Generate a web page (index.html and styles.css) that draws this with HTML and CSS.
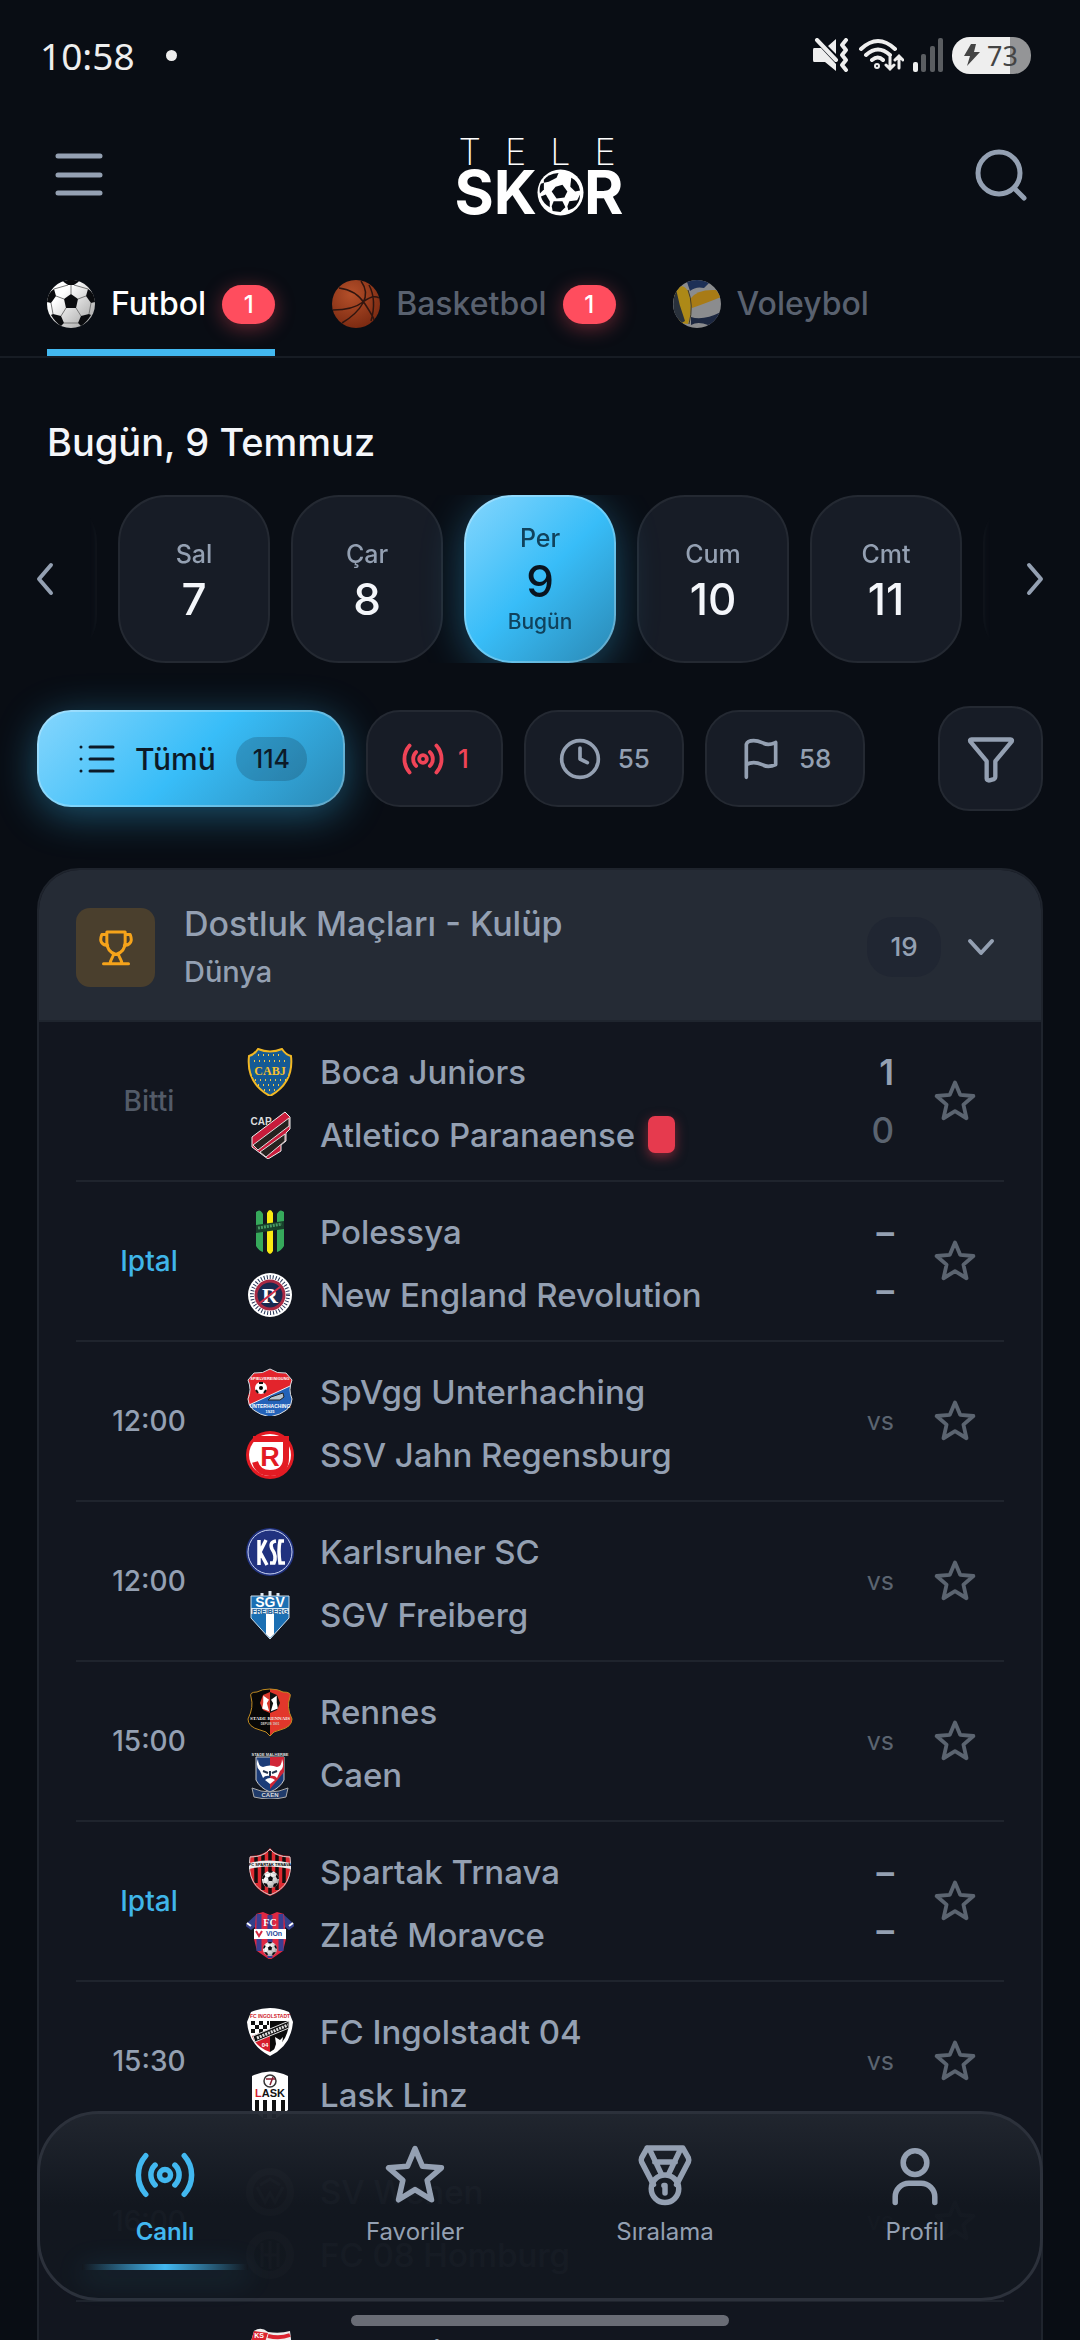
FILE: index.html
```html
<!DOCTYPE html>
<html lang="tr">
<head>
  <meta charset="UTF-8">
  <meta name="viewport" content="width=device-width, initial-scale=1.0">
  <title>TeleSkor</title>
  <link rel="stylesheet" href="styles.css">
</head>
<body>
  <!-- shared icons -->
  <svg class="defs" aria-hidden="true">
    <defs>
      <linearGradient id="shade" x1="0" y1="0" x2="1" y2="1">
        <stop offset="0.3" stop-color="#fff"/>
        <stop offset="1" stop-color="#9b9b9b"/>
      </linearGradient>
      <radialGradient id="orange" cx="0.4" cy="0.3" r="0.7">
        <stop offset="0" stop-color="#b5502a"/>
        <stop offset="1" stop-color="#7d2b12"/>
      </radialGradient>
      <clipPath id="round"><circle cx="24" cy="24" r="24"/></clipPath>
      <symbol id="star" viewBox="0 0 24 24">
        <path d="M12 2.400l2.700 6.400 6.900.6-5.200 4.500 1.600 7.100-6-3.700-6 3.700 1.600-7.100-5.200-4.500 6.900-.6z"/>
      </symbol>
      <symbol id="live" viewBox="0 0 24 24">
        <circle cx="12" cy="12" r="2"/>
        <path d="M8.400 15.600a5 5 0 0 1 0-7.200M15.600 8.400a5 5 0 0 1 0 7.200M5 19a10.500 10.500 0 0 1 0-14M19 5a10.500 10.500 0 0 1 0 14"/>
      </symbol>
      <symbol id="ball" viewBox="0 0 48 48">
        <circle cx="24" cy="24" r="24" fill="url(#shade)"/>
        <g fill="#0a0b0e">
          <path d="M24 14l7 5-2 9H19l-2-9z"/>
          <path d="M16 1.500Q24-2 32 1.500L27 5h-6z"/>
          <path d="M0 22Q1 12 7 9l2 7-5 7z"/>
          <path d="M48 22Q47 12 41 9l-2 7 5 7z"/>
          <path d="M6 34l8 2 3 7-3 3Q8 42 4 35z"/>
          <path d="M42 34l-8 2-3 7 3 3q6-4 10-11z"/>
        </g>
        <path d="M24 5v9M9 16l8 3M39 16l-8 3M19 28l-5 8M29 28l5 8M7 9l14-4M41 9L27 5M4 23l2 11M44 23l-2 11M17 43h14" fill="none" stroke="#777" stroke-width="1"/>
      </symbol>
    </defs>
  </svg>

  <div class="app">
    <div class="status">
      <span class="clock">10:58</span>
      <span class="dot"></span>
      <div class="status-icons">
        <svg width="36" height="34" viewBox="0 0 36 34" fill="#eee">
          <path d="M1 10h7l15 16v7L12 24H1Q0 24 0 22V12Q0 10 1 10zM15 8l8-7v15z"/>
          <path d="M4 2l19 20" stroke="#eee" stroke-width="4" stroke-linecap="round"/>
          <path d="M33 2l-4 5 4 5-4 5 4 5-4 5 4 5" fill="none" stroke="#eee" stroke-width="4" stroke-linecap="round" stroke-linejoin="round"/>
        </svg>
        <svg class="wifi" width="46" height="34" viewBox="0 0 46 34" fill="none" stroke="#eee" stroke-width="4" stroke-linecap="round">
          <path d="M3 11Q20-5 37 11M8 17q12-11 24 0M14 22q6-5 11 0"/>
          <circle cx="19" cy="28" r="1"/>
          <path d="M32 19v12M28 27l4 4 4-4M41 30V19M37 22l4-4 4 4" stroke-width="3"/>
        </svg>
        <svg width="30" height="34" viewBox="0 0 30 34" fill="#5a5d61">
          <rect y="24" width="5" height="10" rx="2" fill="#eee"/>
          <rect x="8" y="16" width="5" height="18" rx="2"/>
          <rect x="17" y="8" width="5" height="26" rx="2"/>
          <rect x="25" width="5" height="34" rx="2"/>
        </svg>
        <span class="battery">
          <svg width="18" height="22" viewBox="0 0 18 22" fill="#444"><path d="M8 0L1 12h6L4 22 17 8h-6l2-8z"/></svg>73
        </span>
      </div>
    </div>

    <header class="header">
      <button class="icon-btn" aria-label="Menü">
        <svg width="48" height="48" viewBox="0 0 48 48" stroke="#94a0b2" stroke-width="5" stroke-linecap="round"><path d="M3 5h42M3 24h42M3 42h42"/></svg>
      </button>
      <div class="logo">
        <div class="logo-top">TELE</div>
        <div class="logo-bottom">
          <span>SK</span>
          <svg width="47" height="47" viewBox="0 0 48 48">
            <circle cx="24" cy="24" r="23.500" fill="#fff"/>
            <g fill="#090d14">
              <path d="M19 16l7-2 5 7-3 6-8 1-5-7z" transform="translate(0 2)"/>
              <path d="M7 11q4-6 15-7l-2 5-8 4-5 1z"/>
              <path d="M27 4l-2 5 8 6 6 1 1-5q-5-6-13-7z" fill="#fff"/>
              <path d="M35 9q7 3 9 13l-5 1-5-5z"/>
              <path d="M4 15l3-1 0 7-4 4q-1-6 1-10z"/>
              <path d="M4 28l5-2 4 7 0 6q-7-4-9-11z"/>
              <path d="M17 33l9 0 3 6-5 5-8-1-1-5z"/>
              <path d="M33 33l8-1 3-6q0 9-7 14l-5 2-1-4z"/>
            </g>
          </svg>
          <span>R</span>
        </div>
      </div>
      <button class="icon-btn" aria-label="Ara">
        <svg width="52" height="52" viewBox="0 0 52 52" fill="none" stroke="#94a0b2" stroke-width="5" stroke-linecap="round"><circle cx="24" cy="24" r="21"/><path d="M39 39l10 10"/></svg>
      </button>
    </header>

    <nav class="tabs">
      <button class="tab active">
        <svg width="48" height="48"><use href="#ball"/></svg>
        Futbol <span class="count">1</span>
      </button>
      <button class="tab">
        <svg width="48" height="48" viewBox="0 0 48 48">
          <circle cx="24" cy="24" r="24" fill="url(#orange)"/>
          <path d="M7 8Q24 10 33 24t9 16M29 1q8 11 2 22T10 43M1 30q20 0 30-8t16-4M37 5q8 15 2 36" fill="none" stroke="#30150f" stroke-width="1.500"/>
        </svg>
        Basketbol <span class="count">1</span>
      </button>
      <button class="tab">
        <svg width="48" height="48" viewBox="0 0 48 48">
          <g clip-path="url(#round)">
            <rect width="48" height="48" fill="#8b8c8e"/>
            <path d="M14 2Q24-3 36 3l-5 5q-8-2-14 3z" fill="#1d3056"/>
            <path d="M17 19Q24 9 43 10l5 7q-12 5-29 11z" fill="#a87b16"/>
            <path d="M0 10Q10 2 15 11q6 16 0 33L6 43z" fill="#ad8917"/>
            <path d="M3 9q3 16 9 32l-5 3Q-4 30 3 9z" fill="#29313b"/>
            <path d="M18 37q12 4 30-5v9l-13 4q-10-4-17 0z" fill="#1c2740"/>
            <path d="M15 10q6 15 1 34" fill="none" stroke="#443a20"/>
          </g>
        </svg>
        Voleybol
      </button>
    </nav>

    <main>
      <h1 class="day-title">Bugün, 9 Temmuz</h1>

      <div class="dates">
        <button class="arrow" aria-label="Önceki">
          <svg width="18" height="34" viewBox="0 0 18 34"><path d="M15 3L3 17l12 14"/></svg>
        </button>
        <div class="strip">
          <button class="date"><small>Pzt</small><b>6</b></button>
          <button class="date"><small>Sal</small><b>7</b></button>
          <button class="date"><small>Çar</small><b>8</b></button>
          <button class="date selected"><small>Per</small><b>9</b><em>Bugün</em></button>
          <button class="date"><small>Cum</small><b>10</b></button>
          <button class="date"><small>Cmt</small><b>11</b></button>
          <button class="date"><small>Paz</small><b>12</b></button>
        </div>
        <button class="arrow" aria-label="Sonraki">
          <svg width="18" height="34" viewBox="0 0 18 34"><path d="M3 3l12 14L3 31"/></svg>
        </button>
      </div>

      <div class="filters">
        <button class="chip all">
          <svg width="36" height="32" viewBox="0 0 36 32" fill="none" stroke="#0c1a28" stroke-width="3" stroke-linecap="round"><path d="M11 4h23M11 16h23M11 28h23M2 4h0M2 16h0M2 28h0"/></svg>
          Tümü <span class="pill">114</span>
        </button>
        <button class="chip live">
          <svg class="line" width="46" height="46"><use href="#live"/></svg>1
        </button>
        <button class="chip">
          <svg class="line" width="44" height="44" viewBox="0 0 24 24"><circle cx="12" cy="12" r="10"/><path d="M12 6v6l4 2"/></svg>55
        </button>
        <button class="chip">
          <svg class="line" width="44" height="44" viewBox="0 0 24 24"><path d="M4 22V4c.5-1.500 2-2 4-2 4 0 5 2 8 2 2 0 3-.6 4-1v12c-1 .5-2 1-4 1-3 0-4-2-8-2-2 0-3 .5-4 1"/></svg>58
        </button>
        <button class="filter-btn" aria-label="Filtrele">
          <svg class="line" width="52" height="52" viewBox="0 0 24 24"><path d="M3 3h18q1 0 .5 1L14 13v7q0 1-.7 1.300l-2 .6Q10 22 10 21v-8L2.500 4Q2 3 3 3z"/></svg>
        </button>
      </div>

      <section class="league">
        <header class="league-head">
          <span class="cup">
            <svg width="40" height="40" viewBox="0 0 24 24" fill="none" stroke="#f5a31a" stroke-width="1.800" stroke-linecap="round" stroke-linejoin="round"><path d="M6.500 3h11v6c0 4-2 6.500-5.500 7.500C8.500 15.500 6.500 13 6.500 9zM6.500 4.500H3.500c-2 5 1 6.500 3.500 6.500M17.500 4.500h3c2 5-1 6.500-3.500 6.500M10.500 16c0 2.500-2 3-2 6M13.500 16c0 2.500 2 3 2 6M4.500 22h15"/></svg>
          </span>
          <div class="league-name">
            <h2>Dostluk Maçları - Kulüp</h2>
            <p>Dünya</p>
          </div>
          <span class="total">19</span>
          <button class="toggle" aria-label="Daralt">
            <svg width="28" height="18" viewBox="0 0 28 18"><path d="M3 3l11 12L25 3"/></svg>
          </button>
        </header>

        <ul class="matches">
          <li class="match">
            <span class="time done">Bitti</span>
            <div class="teams">
              <div class="team">
                <svg viewBox="0 0 48 48">
                  <path d="M12 1q12 5 24 0 4 6 9 7 3 27-21 40Q0 35 3 8q5-1 9-7z" fill="#155a94" stroke="#f2b824" stroke-width="2"/>
                  <path d="M12 7h25M8 13h33M9 32h31M12 37h24M18 42h12" stroke="#f2c744" stroke-width="2" stroke-dasharray="1 4"/>
                  <path d="M6 17h36v12H6z" fill="#155a94"/>
                  <text x="24" y="27" class="mark serif" font-size="12" fill="#f9c12c">CABJ</text>
                </svg>
                Boca Juniors
              </div>
              <div class="team">
                <svg viewBox="0 0 48 48">
                  <path d="M39 1l5 5v12l-4 4v8l-5 4v6l-13 8L6 36V26z" fill="#c81c3b" stroke="#eee"/>
                  <path d="M43 7v8L12 39l-5-5zM39 23v7L20 46l-6-5z" fill="#25221f" stroke="#ddd"/>
                  <text x="15" y="14" class="mark" font-size="10" fill="#ddd">CAP</text>
                </svg>
                Atletico Paranaense <span class="red-card"></span>
              </div>
            </div>
            <div class="score"><b>1</b><span class="lost">0</span></div>
            <button class="fav" aria-label="Favori"><svg class="line"><use href="#star"/></svg></button>
          </li>

          <li class="match">
            <span class="time off">Iptal</span>
            <div class="teams">
              <div class="team">
                <svg viewBox="0 0 48 48">
                  <path d="M10 4q4-4 7 2v38q-4-1-7-6zM38 4q-4-4-7 2v38q4-1 7-6z" fill="#36a95b"/>
                  <path d="M21 5q3-6 6 0v38q-3 6-6 0z" fill="#fbea12"/>
                  <path d="M10 17l28-4v8l-28 4z" fill="#17402a"/>
                  <path d="M12 20l24-4" stroke="#489963" stroke-width="3" stroke-dasharray="2 1"/>
                </svg>
                Polessya
              </div>
              <div class="team">
                <svg viewBox="0 0 48 48">
                  <circle cx="24" cy="24" r="22" fill="#fff"/>
                  <circle cx="24" cy="24" r="18" fill="none" stroke="#263456" stroke-width="4" stroke-dasharray="1 2"/>
                  <circle cx="24" cy="24" r="14" fill="#192a50" stroke="#a82943" stroke-width="3"/>
                  <text x="24" y="32" class="mark serif" font-size="22" fill="#fff">R</text>
                  <path d="M14 32l20-16" stroke="#d02d48" stroke-width="2"/>
                </svg>
                New England Revolution
              </div>
            </div>
            <div class="score"><b>–</b><b>–</b></div>
            <button class="fav" aria-label="Favori"><svg class="line"><use href="#star"/></svg></button>
          </li>

          <li class="match">
            <span class="time">12:00</span>
            <div class="teams">
              <div class="team">
                <svg viewBox="0 0 48 48">
                  <path d="M24 1q7 5 16 4l6 7q-4 10 0 19 0 13-22 18Q2 44 2 31q4-9 0-19l6-7Q17 6 24 1z" fill="#2362b8"/>
                  <path d="M24 1q7 5 16 4l6 7-2 6L3 37q-3-8 1-14Q5 16 2 12l6-7Q17 6 24 1z" fill="#e3242c"/>
                  <path d="M3 37l41-19" stroke="#eee"/>
                  <path d="M24 1q7 5 16 4l6 7q-4 10 0 19 0 13-22 18Q2 44 2 31q4-9 0-19l6-7Q17 6 24 1z" fill="none" stroke="#ddd"/>
                  <circle cx="15" cy="20" r="6" fill="#fff"/><circle cx="15" cy="20" r="2"/>
                  <path d="M13 15h4M10 22l2 3M20 22l-2 3" stroke="#111" stroke-width="2"/>
                  <path d="M22 32l3-3 12-4 1 4-4 3z" fill="#b8c2cc" stroke="#222"/>
                  <text x="24" y="12" class="mark" font-size="4" fill="#fff">SPIELVEREINIGUNG</text>
                  <text x="24" y="40" class="mark" font-size="5" fill="#fff">UNTERHACHING</text>
                  <text x="24" y="45" class="mark" font-size="4" fill="#fff">1925</text>
                </svg>
                SpVgg Unterhaching
              </div>
              <div class="team">
                <svg viewBox="0 0 48 48">
                  <circle cx="24" cy="24" r="24" fill="#e31b23"/>
                  <circle cx="24" cy="24" r="21" fill="#fff"/>
                  <path d="M7 8h33v19q0 15-16 15Q12 42 9 31" fill="none" stroke="#e31b23" stroke-width="6"/>
                  <text x="24" y="35" class="mark" font-size="27" fill="#e31b23">R</text>
                </svg>
                SSV Jahn Regensburg
              </div>
            </div>
            <span class="vs">vs</span>
            <button class="fav" aria-label="Favori"><svg class="line"><use href="#star"/></svg></button>
          </li>

          <li class="match">
            <span class="time">12:00</span>
            <div class="teams">
              <div class="team">
                <svg viewBox="0 0 48 48">
                  <circle cx="24" cy="24" r="24" fill="#21327f"/>
                  <circle cx="24" cy="24" r="22" fill="none" stroke="#c9d4f2"/>
                  <path d="M13 12v25M20 12l-6 12 7 13M30 13q-7 1-4 8 5 7 2 14h-4M38 13h-4q-2 9 0 22h5" fill="none" stroke="#fff" stroke-width="3.500"/>
                </svg>
                Karlsruher SC
              </div>
              <div class="team">
                <svg viewBox="0 0 48 48">
                  <path d="M5 5h38v22L24 48 5 27z" fill="#1b6fb3" stroke="#cfe1ef"/>
                  <path d="M20 23h8v20l-4 4-4-4z" fill="#fff"/>
                  <text x="24" y="16" class="mark" font-size="14" fill="#fff">SGV</text>
                  <path d="M5 17h38v6H5z" fill="#d8e8f4"/>
                  <text x="24" y="23" class="mark" font-size="7" fill="#1b5d95">FREIBERG</text>
                  <path d="M24 0v5M16 2v3M32 2v3" stroke="#dde8f2" stroke-width="3"/>
                </svg>
                SGV Freiberg
              </div>
            </div>
            <span class="vs">vs</span>
            <button class="fav" aria-label="Favori"><svg class="line"><use href="#star"/></svg></button>
          </li>

          <li class="match">
            <span class="time">15:00</span>
            <div class="teams">
              <div class="team">
                <svg viewBox="0 0 48 48">
                  <path d="M24 1q8 0 13 3 9 0 7 5-4 10 2 22 0 8-12 11-7 1-10 6z" fill="#e2372b"/>
                  <path d="M24 1q-8 0-13 3-8 0-6 5 3 10-3 22 0 8 12 11 7 1 10 6z" fill="#070707"/>
                  <path d="M24 1q8 0 13 3 9 0 7 5-4 10 2 22 0 8-12 11-7 1-10 6-3-5-10-6-12-3-12-11Q8 19 5 9q-2-5 6-5 5-3 13-3z" fill="none" stroke="#c08b22"/>
                  <path d="M24 4l7 3 3 8-3 7-7 3z" fill="#111"/><path d="M24 4l-7 3-3 8 3 7 7 3z" fill="#d8382c"/>
                  <path d="M18 9l4 3-2 3 2 7-5-2 1-5zM30 9l-4 3 2 3-2 7 5-2-1-5z" fill="#fff" stroke="#fff" stroke-width="1.500"/>
                  <text x="24" y="32" class="mark serif" font-size="5" fill="#eee">STADE RENNAIS</text>
                  <text x="24" y="37" class="mark" font-size="3" fill="#ccc">DEPUIS 1901</text>
                </svg>
                Rennes
              </div>
              <div class="team">
                <svg viewBox="0 0 48 48">
                  <path d="M10 6h28v23q-4 8-14 12Q14 37 10 29z" fill="#1c3c78" stroke="#ccc"/>
                  <path d="M24 6h14v15L24 38z" fill="#d02636"/>
                  <path d="M12 8q0 7 5 8 7-3 14 0 5-1 5-8 3 8-2 12l-3 7q-2-3-7-2-5-1-7 2l-3-7q-5-5-2-12zM19 29q5-4 10 0l-5 4z" fill="#fff"/>
                  <path d="M17 20l5 2M31 20l-5 2M24 20v5" stroke="#26364f" stroke-width="2"/>
                  <text x="24" y="5" class="mark" font-size="4" fill="#ddd">STADE MALHERBE</text>
                  <path d="M6 37q18 8 36 0l-2 9q-16 4-32 0z" fill="#203b6a" stroke="#aaa"/>
                  <text x="24" y="46" class="mark" font-size="6" fill="#ddd">CAEN</text>
                </svg>
                Caen
              </div>
            </div>
            <span class="vs">vs</span>
            <button class="fav" aria-label="Favori"><svg class="line"><use href="#star"/></svg></button>
          </li>

          <li class="match">
            <span class="time off">Iptal</span>
            <div class="teams">
              <div class="team">
                <svg viewBox="0 0 48 48">
                  <path d="M24 0q6 8 20 8 5 31-20 40Q-1 39 4 8 18 8 24 0z" fill="#de2930"/>
                  <path d="M10 9v26M17 7v35M24 3v43M31 7v35M38 9v26" stroke="#120d0d" stroke-width="3.500"/>
                  <path d="M24 1q6 8 20 8 4 29-20 38Q0 38 4 9 18 9 24 1z" fill="none" stroke="#ccc"/>
                  <path d="M3 15q21-5 42 0v6q-21-5-42 0z" fill="#eee"/>
                  <text x="24" y="18" class="mark" font-size="4">FC SPARTAK TRNAVA</text>
                  <svg x="16" y="23" width="17" height="17"><use href="#ball"/></svg>
                </svg>
                Spartak Trnava
              </div>
              <div class="team">
                <svg viewBox="0 0 48 48">
                  <path d="M12 4L1 14l4 3 4-3M36 4l11 10-4 3-4-3" fill="#35418a" stroke="#35418a" stroke-width="3"/>
                  <path d="M10 3l7-2 7 3 7-3 7 2 2 25-3 12-13 9-13-9L8 28z" fill="#e02842"/>
                  <path d="M13 3v37M24 4v43M35 3v37" stroke="#3a3f91" stroke-width="5"/>
                  <text x="24" y="15" class="mark serif" font-size="10" fill="#fff">FC</text>
                  <path d="M8 18h32v10H8z" fill="#fff"/>
                  <text x="28" y="25" class="mark" font-size="7" fill="#24499a">ViOn</text>
                  <path d="M10 20l3 5 3-5" fill="none" stroke="#d52840" stroke-width="2"/>
                  <svg x="17" y="31" width="14" height="14"><use href="#ball"/></svg>
                  <path d="M1 12l4 3M47 12l-4 3" stroke="#fff" stroke-width="2"/>
                </svg>
                Zlaté Moravce
              </div>
            </div>
            <div class="score"><b>–</b><b>–</b></div>
            <button class="fav" aria-label="Favori"><svg class="line"><use href="#star"/></svg></button>
          </li>

          <li class="match">
            <span class="time">15:30</span>
            <div class="teams">
              <div class="team">
                <svg viewBox="0 0 48 48">
                  <path d="M5 4Q24-4 43 4l4 10Q45 38 24 48 3 38 1 14z" fill="#fff"/>
                  <path d="M24 13h19q0 21-19 31z" fill="#0b0b0b"/>
                  <path d="M6 28l18-7v23Q10 39 6 28z" fill="#d71d2b"/>
                  <path d="M5 15h18M9 19h14M5 23h12" stroke="#111" stroke-width="4" stroke-dasharray="4 4"/>
                  <path d="M7 28l36-15v7L9 34z" fill="#111" stroke="#ddd"/>
                  <path d="M11 30l31-13" stroke="#ddd" stroke-width="3" stroke-dasharray="2 1"/>
                  <path d="M29 29l5 3 3-3-1 7-4 4v2h-4l2-6z" fill="#fff"/>
                  <text x="24" y="10" class="mark" font-size="5" fill="#cf1e2c">FC INGOLSTADT</text>
                  <text x="19" y="39" class="mark" font-size="6" fill="#fff">04</text>
                </svg>
                FC Ingolstadt 04
              </div>
              <div class="team">
                <svg viewBox="0 0 48 48">
                  <path d="M6 5Q24-4 42 5v34L24 52 6 39z" fill="#fff"/>
                  <path d="M11 29v14M19 29v18M28 29v18M37 29v14" stroke="#111" stroke-width="4"/>
                  <circle cx="24" cy="10" r="6" fill="none" stroke="#333" stroke-width="1.500"/>
                  <path d="M20 8h9M24 14l3-8" stroke="#823" stroke-width="1.500"/>
                  <text x="24" y="26" class="mark" font-size="11" fill="#111"><tspan fill="#d5202e">L</tspan>ASK</text>
                </svg>
                Lask Linz
              </div>
            </div>
            <span class="vs">vs</span>
            <button class="fav" aria-label="Favori"><svg class="line"><use href="#star"/></svg></button>
          </li>

          <li class="match">
            <span class="time">16:00</span>
            <div class="teams">
              <div class="team">
                <svg viewBox="0 0 48 48"><circle cx="24" cy="24" r="24" fill="#777"/><circle cx="24" cy="24" r="17" fill="#211"/><path d="M11 19l8 15 5-9 5 9 8-15M14 17l10-6 10 6" fill="none" stroke="#777" stroke-width="3"/></svg>
                SV Wehen
              </div>
              <div class="team">
                <svg viewBox="0 0 48 48"><circle cx="24" cy="24" r="24" fill="#777"/><circle cx="24" cy="24" r="16" fill="#121"/><path d="M16 12v24M24 10v28M32 12v24M15 24h18" stroke="#777" stroke-width="3"/></svg>
                FC 08 Homburg
              </div>
            </div>
            <span class="vs">vs</span>
            <button class="fav" aria-label="Favori"><svg class="line"><use href="#star"/></svg></button>
          </li>

          <li class="match">
            <span class="time"></span>
            <div class="teams">
              <div class="team">
                <svg viewBox="0 0 48 48">
                  <path d="M8 3Q15-2 22 4q12 2 22-1l2 16q-13 6-24 1L10 45 3 20z" fill="#eee"/>
                  <path d="M22 8q12 3 22-1M22 15q12 3 23-1" fill="none" stroke="#dc2430" stroke-width="4"/>
                  <path d="M8 3l14 2-3 9q-8-4-14 0z" fill="#dc2430"/>
                  <text x="13" y="10" class="mark" font-size="7" fill="#fff">KS</text>
                </svg>
                Cracovia Krakow
              </div>
            </div>
          </li>
        </ul>
      </section>
    </main>

    <nav class="bottom-nav">
      <a class="nav-item active" href="#">
        <svg class="line" width="66" height="66"><use href="#live"/></svg>Canlı
      </a>
      <a class="nav-item" href="#">
        <svg class="line" width="66" height="66"><use href="#star"/></svg>Favoriler
      </a>
      <a class="nav-item" href="#">
        <svg class="line" width="66" height="66" viewBox="0 0 24 24"><path d="M5.500 2.200h13l2 3.600q.3.800 0 1.500l-4.300 8.200M7.800 15.500L3.500 7.300q-.3-.7 0-1.500l2-3.600M6.300 2.500l4.300 9M17.700 2.500l-4.300 9M8.300 7.300h7.400"/><circle cx="12" cy="17" r="5"/><path d="M11.600 15.800h.4v2.700"/></svg>Sıralama
      </a>
      <a class="nav-item" href="#">
        <svg class="line" width="66" height="66" viewBox="0 0 24 24"><circle cx="12" cy="7.500" r="4.300"/><path d="M4.800 22v-2a5 5 0 0 1 5-5h4.400a5 5 0 0 1 5 5v2"/></svg>Profil
      </a>
    </nav>
    <div class="home-bar"></div>
  </div>
</body>
</html>
```

FILE: styles.css
```css
* {
  box-sizing: border-box;
}

body {
  margin: 0;
  background: #090d14;
  color: #94a0b2;
  font-family: Inter, "Open Sans", sans-serif;
  font-weight: 500;
}

button {
  margin: 0;
  padding: 0;
  border: none;
  background: none;
  color: inherit;
  font: inherit;
  cursor: pointer;
}

svg {
  flex: none;
}

.defs {
  position: absolute;
  width: 0;
  height: 0;
}

.line {
  fill: none;
  stroke: currentColor;
  stroke-width: 2;
  stroke-linecap: round;
  stroke-linejoin: round;
}

.app {
  position: relative;
  height: 100vh;
  overflow: hidden;
}

/* status bar */
.status {
  display: flex;
  align-items: center;
  height: 110px;
  padding: 0 49px 0 40px;
  color: #eee;
  font: 400 37px "Noto Sans", sans-serif;
}

.dot {
  width: 11px;
  height: 11px;
  margin-left: 31px;
  border-radius: 50%;
  background: #eee;
}

.status-icons {
  display: flex;
  align-items: center;
  gap: 9px;
  margin-left: auto;
}

.battery {
  display: flex;
  align-items: center;
  gap: 6px;
  height: 37px;
  padding: 0 13px 0 11px;
  border-radius: 18px;
  background: linear-gradient(90deg, #eee 73%, #949597 73%);
  color: #444;
  font-size: 27px;
}

/* header */
.header {
  display: flex;
  justify-content: space-between;
  align-items: center;
  height: 130px;
  padding: 0 53px 0 55px;
}

.icon-btn {
  display: flex;
}

.logo {
  color: #fff;
}

.logo-top {
  margin-right: -24px;
  padding-left: 4px;
  font-size: 36px;
  font-weight: 200;
  line-height: 34px;
  letter-spacing: 24px;
}

.logo-bottom {
  display: flex;
  align-items: center;
  height: 46px;
  font-size: 60px;
  font-weight: 700;
}

/* sport tabs */
.tabs {
  display: flex;
  gap: 57px;
  padding: 0 47px;
  border-bottom: 2px solid #171c24;
}

.tab {
  display: flex;
  align-items: center;
  gap: 16px;
  padding: 40px 0 21px;
  border-bottom: 7px solid transparent;
  color: #59616f;
  font-size: 32px;
  line-height: 48px;
}

.tab.active {
  border-color: #42b8f0;
  color: #fff;
}

.count {
  width: 53px;
  height: 39px;
  border-radius: 20px;
  background: #ff4d5e;
  box-shadow: 0 4px 20px rgba(255, 77, 94, 0.4);
  color: #fff;
  font-size: 24px;
  line-height: 39px;
}

/* date picker */
.day-title {
  margin: 56px 47px 25px;
  color: #f4f6fa;
  font-size: 38px;
  font-weight: 500;
  line-height: 56px;
}

.dates {
  display: flex;
}

.arrow {
  display: flex;
  justify-content: center;
  align-items: center;
  width: 90px;
}

.arrow path,
.toggle path {
  fill: none;
  stroke: #94a0b2;
  stroke-width: 4;
  stroke-linecap: round;
  stroke-linejoin: round;
}

.strip {
  display: flex;
  flex: 1;
  justify-content: center;
  gap: 21px;
  overflow: hidden;
  -webkit-mask-image: linear-gradient(90deg, transparent, #000 30px, #000 calc(100% - 30px), transparent);
  mask-image: linear-gradient(90deg, transparent, #000 30px, #000 calc(100% - 30px), transparent);
}

.date {
  display: flex;
  flex: none;
  flex-direction: column;
  justify-content: center;
  align-items: center;
  width: 152px;
  height: 168px;
  padding-top: 3px;
  border: 2px solid #242932;
  border-radius: 48px;
  background: #171c26;
}

.date small {
  font-size: 25px;
  line-height: 36px;
}

.date b {
  color: #f4f6fa;
  font-size: 44px;
  font-weight: 500;
  line-height: 54px;
}

.date em {
  font-size: 21px;
  font-style: normal;
  line-height: 28px;
}

.date.selected {
  z-index: 1;
  padding-top: 0;
  border-color: rgba(255, 255, 255, 0.25);
  background: linear-gradient(135deg, #86d6fd, #38bdf8 50%, #2b88b3) border-box;
  box-shadow: 0 8px 40px rgba(56, 189, 248, 0.35);
  color: #10425c;
}

.date.selected small {
  line-height: 32px;
}

.date.selected b {
  color: #09141f;
}

/* filters */
.filters {
  display: flex;
  align-items: center;
  gap: 21px;
  margin: 43px 37px 57px;
}

.chip {
  display: flex;
  align-items: center;
  gap: 16px;
  height: 97px;
  padding: 0 32px;
  border: 2px solid #242932;
  border-radius: 34px;
  background: #171c26;
  font-size: 26px;
}

.chip.live {
  gap: 12px;
  color: #f04457;
}

.chip.all {
  gap: 20px;
  padding: 0 36px 0 40px;
  border-color: rgba(255, 255, 255, 0.25);
  background: linear-gradient(135deg, #86d6fd, #38bdf8 50%, #2b88b3) border-box;
  box-shadow: 0 8px 40px rgba(56, 189, 248, 0.4);
  color: #0c1a28;
  font-size: 30px;
}

.pill {
  padding: 0 17px;
  border-radius: 22px;
  background: rgba(15, 30, 45, 0.2);
  font-size: 25px;
  line-height: 44px;
}

.filter-btn {
  display: flex;
  justify-content: center;
  align-items: center;
  width: 105px;
  height: 105px;
  margin-left: auto;
  border: 2px solid #242932;
  border-radius: 32px;
  background: #171c26;
}

/* league card */
.league {
  margin: 0 37px;
  border: 2px solid #1f242d;
  border-radius: 42px 42px 0 0;
  background: #12161f;
  overflow: hidden;
}

.league-head {
  display: flex;
  align-items: center;
  height: 152px;
  padding: 4px 46px 0 37px;
  border-bottom: 2px solid #1f252e;
  background: #252b35;
}

.cup {
  display: flex;
  justify-content: center;
  align-items: center;
  width: 79px;
  height: 79px;
  margin-right: 29px;
  border-radius: 14px;
  background: #4a3f2d;
}

.league-name {
  flex: 1;
}

.league-name h2 {
  margin: 0;
  font-size: 34px;
  font-weight: 500;
  line-height: 50px;
}

.league-name p {
  margin: 0;
  font-size: 29px;
  line-height: 46px;
}

.total {
  width: 74px;
  margin-right: 26px;
  border-radius: 26px;
  background: #202632;
  font-size: 26px;
  line-height: 60px;
  text-align: center;
}

.toggle {
  display: flex;
}

.matches {
  margin: 0;
  padding: 0 37px;
  list-style: none;
}

.match {
  display: flex;
  align-items: center;
  height: 160px;
  border-bottom: 2px solid #1f242d;
}

.time {
  width: 146px;
  font-size: 28px;
  text-align: center;
}

.time.done {
  color: #535b68;
}

.time.off {
  color: #3fb5e8;
}

.teams {
  flex: 1;
  align-self: flex-start;
  padding: 18px 0 0 24px;
}

.team {
  display: flex;
  align-items: center;
  gap: 26px;
  height: 63px;
  font-size: 33px;
}

.team > svg {
  width: 48px;
  height: 48px;
}

.mark {
  font-family: "Liberation Sans", sans-serif;
  font-weight: 700;
  text-anchor: middle;
}

.mark.serif {
  font-family: "Liberation Serif", serif;
}

.red-card {
  width: 27px;
  height: 37px;
  margin-left: -13px;
  border-radius: 7px;
  background: #e63a4e;
  box-shadow: 0 4px 12px rgba(230, 58, 78, 0.5);
}

.score {
  display: flex;
  flex-direction: column;
  align-items: flex-end;
  font-size: 35px;
  line-height: 58px;
}

.score b {
  font-weight: 600;
}

.lost,
.fav {
  color: #5b6470;
}

.vs {
  font-size: 25px;
  font-weight: 400;
  color: #5b6470;
}

.fav {
  display: flex;
  margin: 0 26px 0 38px;
}

.fav svg {
  width: 46px;
  height: 46px;
}

/* bottom navigation */
.bottom-nav {
  position: absolute;
  right: 37px;
  bottom: 39px;
  left: 37px;
  display: flex;
  height: 190px;
  border: 3px solid #2c313b;
  border-radius: 62px;
  background: linear-gradient(rgba(33, 38, 47, 0.97), rgba(18, 23, 31, 0.97) 50%);
}

.nav-item {
  position: relative;
  display: flex;
  flex: 1;
  flex-direction: column;
  align-items: center;
  padding-top: 28px;
  color: #94a0b2;
  font-size: 24px;
  font-weight: 400;
  line-height: 48px;
  text-decoration: none;
}

.nav-item.active {
  color: #42b8f0;
  font-weight: 600;
}

.nav-item.active::after {
  content: "";
  position: absolute;
  right: 42px;
  bottom: 28px;
  left: 42px;
  height: 6px;
  background: linear-gradient(90deg, transparent, #42b8f0, transparent);
  box-shadow: 0 6px 30px rgba(66, 184, 240, 0.3);
}

.home-bar {
  position: absolute;
  bottom: 14px;
  left: 50%;
  width: 35%;
  height: 11px;
  border-radius: 6px;
  background: #696c75;
  transform: translateX(-50%);
}
```
